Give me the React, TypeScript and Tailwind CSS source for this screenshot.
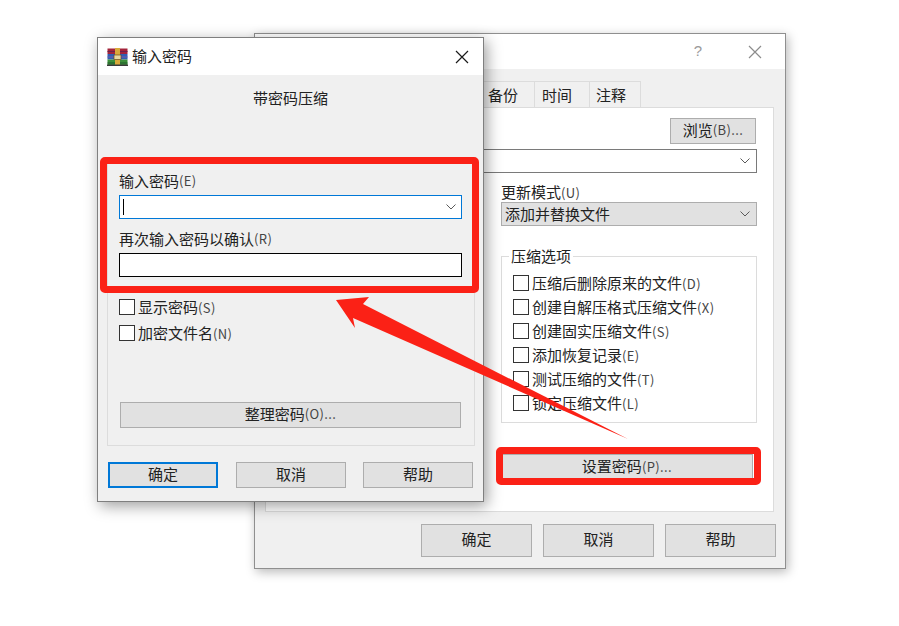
const FONT = "font-['Noto_Sans_CJK_SC','Noto_Sans',sans-serif]";

function Chevron({ className = "" }: { className?: string }) {
  return (
    <svg width="10" height="6" viewBox="0 0 10 6" className={className}>
      <path d="M0.5 0.5L5 5L9.5 0.5" fill="none" stroke="#5a5a5a" strokeWidth="1" />
    </svg>
  );
}

function Close({ color, size = 14 }: { color: string; size?: number }) {
  return (
    <svg width={size} height={size} viewBox="0 0 14 14">
      <path d="M1 1L13 13M13 1L1 13" fill="none" stroke={color} strokeWidth="1.2" />
    </svg>
  );
}

function Hot({ children }: { children: string }) {
  return <span className="text-[13px] tracking-[0.4px] text-[#444]">{children}</span>;
}

function Check({ label, hot }: { label: string; hot: string }) {
  return (
    <div className="flex items-center h-[24px] gap-[3px]">
      <div className="w-[16px] h-[16px] border border-[#333] bg-white shrink-0" />
      <span className="-mt-[2px] text-[15px] leading-none text-[#222] whitespace-nowrap">
        {label}
        <Hot>{hot}</Hot>
      </span>
    </div>
  );
}

function Btn({ children, className = "" }: { children: React.ReactNode; className?: string }) {
  return (
    <div className={`flex items-center justify-center bg-[#e1e1e1] border border-[#adadad] text-[15px] text-[#222] ${className}`}>
      {children}
    </div>
  );
}

function WinrarIcon() {
  return (
    <svg width="21" height="18" viewBox="0 0 21 18">
      <rect x="0.5" y="0.5" width="20" height="5.5" fill="#a3243b" />
      <rect x="0.5" y="6" width="20" height="5.5" fill="#2f5fb3" />
      <rect x="0.5" y="11.5" width="20" height="6" fill="#3c8f3a" />
      <rect x="0.5" y="3" width="20" height="1" fill="#6d1f4a" />
      <rect x="0.5" y="8.5" width="20" height="1" fill="#7a5aa8" />
      <rect x="0.5" y="14.5" width="20" height="1" fill="#1f5a2a" />
      <rect x="8" y="0" width="5" height="18" fill="#d9a93a" />
      <rect x="7" y="7" width="7" height="4.5" fill="#e8d9a0" stroke="#6b4a1a" strokeWidth="0.7" />
      <rect x="0" y="16.5" width="21" height="1.5" fill="#3a3a3a" />
    </svg>
  );
}

function BackWindow() {
  return (
    <div className="absolute left-[254px] top-[33px] w-[532px] h-[536px] bg-[#f0f0f0] border border-[#8f8f8f] shadow-[2px_3px_10px_rgba(0,0,0,0.28)] flex flex-col">
      <div className="h-[35px] bg-white flex items-center justify-end shrink-0 pr-[23px] gap-[46px]">
        <span className="text-[15px] text-[#9a9a9a] font-['Liberation_Sans',sans-serif]">?</span>
        <Close color="#8c8c8c" />
      </div>
      <div className="flex pl-[229px] pt-[12px] h-[38px] shrink-0">
        {[["备份", "w-[51px] pl-[4px]"], ["时间", "w-[55px] pl-[7px]"], ["注释", "w-[51px] pl-[6px]"]].map(([t, w]) => (
          <div key={t} className={`${w} pt-[2px] h-[26px] bg-[#f0f0f0] border-t border-r border-[#dcdcdc] flex items-center text-[15px] text-[#222]`}>
            {t}
          </div>
        ))}
      </div>
      <div className="ml-[10px] w-[509px] h-[405px] bg-white border border-[#dcdcdc] shrink-0 flex flex-col items-end pr-[17px] pt-[10px]">
        <Btn className="w-[86px] h-[26px] pb-[2px]">
          浏览<Hot>(B)...</Hot>
        </Btn>
        <div className="mt-[5px] w-[300px] h-[24px] border border-[#7a7a7a] bg-white flex items-center justify-end pr-[6px] -mr-[1px]">
          <Chevron />
        </div>
        <div className="w-[256px] -mr-[1px]">
          <div className="mt-[10px] h-[19px] flex items-center text-[15px] text-[#222]">
            更新模式<Hot>(U)</Hot>
          </div>
          <div className="h-[24px] bg-[#e1e1e1] border border-[#adadad] flex items-center justify-between pl-[3px] pr-[6px] text-[15px] text-[#222]">
            添加并替换文件
            <Chevron />
          </div>
          <div className="relative mt-[30px] h-[167px] border border-[#dcdcdc] pl-[11px] pt-[14px]">
            <span className="absolute left-[7px] -top-[11px] bg-white px-[2px] text-[15px] leading-[20px] text-[#222]">压缩选项</span>
            <Check label="压缩后删除原来的文件" hot="(D)" />
            <Check label="创建自解压格式压缩文件" hot="(X)" />
            <Check label="创建固实压缩文件" hot="(S)" />
            <Check label="添加恢复记录" hot="(E)" />
            <Check label="测试压缩的文件" hot="(T)" />
            <Check label="锁定压缩文件" hot="(L)" />
          </div>
          <Btn className="mt-[31px] h-[25px] w-[252px]">
            设置密码<Hot>(P)...</Hot>
          </Btn>
        </div>
      </div>
      <div className="flex justify-end gap-[11px] pr-[9px] pt-[12px]">
        <Btn className="w-[111px] h-[33px] pb-[2px]">确定</Btn>
        <Btn className="w-[111px] h-[33px] pb-[2px]">取消</Btn>
        <Btn className="w-[111px] h-[33px] pb-[2px]">帮助</Btn>
      </div>
    </div>
  );
}

function FrontWindow() {
  return (
    <div className="absolute left-[97px] top-[37px] w-[387px] h-[465px] bg-[#f0f0f0] border border-[#7f7f7f] shadow-[3px_4px_14px_rgba(0,0,0,0.38)] flex flex-col">
      <div className="h-[37px] bg-white flex items-center shrink-0 pl-[9px] pr-[14px]">
        <WinrarIcon />
        <span className="ml-[4px] text-[15px] text-[#222]">输入密码</span>
        <div className="ml-auto">
          <Close color="#1a1a1a" />
        </div>
      </div>
      <div className="h-[85px] pt-[12px] flex justify-center text-[15px] leading-[22px] text-[#222] shrink-0">带密码压缩</div>
      <div className="ml-[9px] w-[368px] h-[286px] border border-[#dcdcdc] px-[11px] flex flex-col shrink-0">
        <div className="mt-[10px] h-[20px] flex items-center text-[15px] text-[#222]">
          输入密码<Hot>(E)</Hot>
        </div>
        <div className="mt-[4px] h-[24px] w-[343px] bg-white border border-[#0078d7] flex items-center justify-between pl-[3px] pr-[5px]">
          <div className="w-[1px] h-[16px] bg-black" />
          <Chevron />
        </div>
        <div className="mt-[10px] h-[20px] flex items-center text-[15px] text-[#222]">
          再次输入密码以确认<Hot>(R)</Hot>
        </div>
        <div className="mt-[4px] h-[24px] w-[343px] bg-white border border-black" />
        <div className="mt-[18px] flex flex-col gap-[2px]">
          <Check label="显示密码" hot="(S)" />
          <Check label="加密文件名" hot="(N)" />
        </div>
        <Btn className="mt-[57px] h-[26px] w-[341px] ml-[1px] pb-[2px]">
          整理密码<Hot>(O)...</Hot>
        </Btn>
      </div>
      <div className="flex pl-[10px] pt-[16px]">
        <Btn className="w-[110px] h-[26px] pb-[2px] !border-2 !border-[#0078d7]">确定</Btn>
        <Btn className="ml-[18px] w-[110px] h-[26px] pb-[2px]">取消</Btn>
        <Btn className="ml-[17px] w-[110px] h-[26px] pb-[2px]">帮助</Btn>
      </div>
    </div>
  );
}

export default function App() {
  return (
    <div className={`relative w-[899px] h-[626px] bg-white overflow-hidden ${FONT}`}>
      <BackWindow />
      <FrontWindow />
      <div className="absolute left-[100px] top-[157px] w-[379px] h-[136px] border-[7px] border-[#fb2116] rounded-[5px]" />
      <div className="absolute left-[496px] top-[447px] w-[265px] h-[38px] border-[7px] border-[#fb2116] rounded-[5px]" />
      <svg className="absolute left-0 top-0 pointer-events-none" width="899" height="626" viewBox="0 0 899 626">
        <polygon points="336,300 369,297 363,304 628,439 353,318 355,328" fill="#fb2116" />
      </svg>
    </div>
  );
}
